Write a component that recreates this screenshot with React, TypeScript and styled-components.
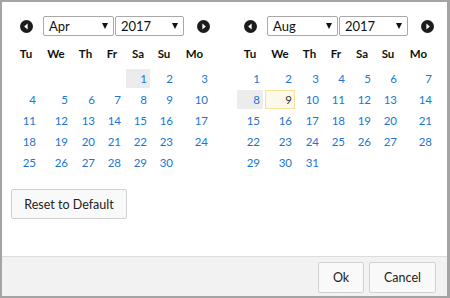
import React from "react";
import styled, { createGlobalStyle } from "styled-components";

const GlobalStyle = createGlobalStyle`
  html, body {
    margin: 0;
    padding: 0;
    background: #ffffff;
  }
  body {
    font-family: Lato, "Liberation Sans", sans-serif;
    color: #222;
  }
`;

const Window = styled.div`
  width: 450px;
  height: 298px;
  box-sizing: border-box;
  border: 2px solid #a4a4a4;
  border-right-width: 3px;
  display: flex;
  flex-direction: column;
  background: #fff;
`;

const Body = styled.div`
  flex: 1;
  padding: 14px 0 0 9px;
`;

const Calendars = styled.div`
  display: flex;
  gap: 26px;
  margin-left: 2px;
`;

const Calendar = styled.div`
  width: 198px;
`;

const NavRow = styled.div`
  display: flex;
  align-items: center;
  height: 20px;
  padding-left: 7px;
`;

const ArrowButton = styled.span`
  display: inline-flex;
  width: 13px;
  height: 13px;
`;

const Selects = styled.div`
  display: flex;
  gap: 1px;
  margin: 0 13px 0 10px;
`;

const SelectBox = styled.div<{ $width: number }>`
  box-sizing: border-box;
  width: ${(p) => p.$width}px;
  height: 20px;
  border: 1px solid #a9a9a9;
  border-radius: 2px;
  display: flex;
  align-items: center;
  justify-content: space-between;
  padding: 0 5px 0 5px;
  font-size: 13px;
  color: #111;
`;

const Caret = styled.span`
  width: 0;
  height: 0;
  border-left: 3.5px solid transparent;
  border-right: 3.5px solid transparent;
  border-top: 6px solid #111;
`;

const WeekGrid = styled.div`
  display: grid;
  grid-template-columns: 26px 30px 25px 24px 24px 24px 33px;
  column-gap: 2px;
  row-gap: 2px;
`;

const WeekHeader = styled(WeekGrid)`
  margin-top: 8px;
`;

const DayGrid = styled(WeekGrid)`
  margin-top: 6px;
`;

const HeadCell = styled.div`
  height: 19px;
  line-height: 19px;
  text-align: center;
  font-weight: 700;
  font-size: 11.5px;
  color: #111;
`;

const DayCell = styled.div<{ $kind?: "muted" | "today" }>`
  box-sizing: border-box;
  height: 19px;
  line-height: 17px;
  text-align: right;
  padding-right: 2px;
  font-size: 11.5px;
  color: ${(p) => (p.$kind === "today" ? "#333" : "#1b76d3")};
  border: 1px solid ${(p) => (p.$kind === "today" ? "#f6e29a" : "transparent")};
  background: ${(p) =>
    p.$kind === "muted" ? "#ececec" : p.$kind === "today" ? "#fcf9ea" : "transparent"};
`;

const ResetButton = styled.button`
  margin-top: 17px;
  width: 116px;
  height: 30px;
  box-sizing: border-box;
  border: 1px solid #cfcfcf;
  border-radius: 2px;
  background: #f9f9f9;
  font-family: inherit;
  font-size: 12.5px;
  color: #222;
  padding: 0;
`;

const Footer = styled.div`
  height: 40px;
  box-sizing: border-box;
  border-top: 1px solid #dcdcdc;
  background: #f2f2f2;
  display: flex;
  justify-content: flex-end;
  align-items: flex-start;
  gap: 5px;
  padding: 5px 11px 0 0;
`;

const FooterButton = styled.button<{ $width: number }>`
  width: ${(p) => p.$width}px;
  height: 31px;
  box-sizing: border-box;
  border: 1px solid #d2d2d2;
  border-radius: 2px;
  background: #f9f9f9;
  font-family: inherit;
  font-size: 12.5px;
  color: #222;
  padding: 0;
`;

const Arrow = ({ dir }: { dir: "left" | "right" }) => (
  <ArrowButton>
    <svg width="13" height="13" viewBox="0 0 13 13">
      <circle cx="6.5" cy="6.5" r="6.5" fill="#1c1c1c" />
      {dir === "left" ? (
        <polygon points="7.6,3.4 7.6,9.6 4.2,6.5" fill="#fff" />
      ) : (
        <polygon points="5.4,3.4 5.4,9.6 8.8,6.5" fill="#fff" />
      )}
    </svg>
  </ArrowButton>
);

const WEEKDAYS = ["Tu", "We", "Th", "Fr", "Sa", "Su", "Mo"];

interface MonthProps {
  month: string;
  year: string;
  offset: number;
  days: number;
  muted?: number;
  today?: number;
}

const Month = ({ month, year, offset, days, muted, today }: MonthProps) => {
  const cells: React.ReactNode[] = [];
  for (let i = 0; i < offset; i++) cells.push(<div key={`e${i}`} />);
  for (let d = 1; d <= days; d++) {
    const kind = d === muted ? "muted" : d === today ? "today" : undefined;
    cells.push(
      <DayCell key={d} $kind={kind}>
        {d}
      </DayCell>
    );
  }
  return (
    <Calendar>
      <NavRow>
        <Arrow dir="left" />
        <Selects>
          <SelectBox $width={71}>
            <span>{month}</span>
            <Caret />
          </SelectBox>
          <SelectBox $width={69}>
            <span>{year}</span>
            <Caret />
          </SelectBox>
        </Selects>
        <Arrow dir="right" />
      </NavRow>
      <WeekHeader>
        {WEEKDAYS.map((w) => (
          <HeadCell key={w}>{w}</HeadCell>
        ))}
      </WeekHeader>
      <DayGrid>{cells}</DayGrid>
    </Calendar>
  );
};

const App = (): JSX.Element => {
  return (
    <>
      <GlobalStyle />
      <Window>
        <Body>
          <Calendars>
            <Month month="Apr" year="2017" offset={4} days={30} muted={1} />
            <Month month="Aug" year="2017" offset={0} days={31} muted={8} today={9} />
          </Calendars>
          <ResetButton>Reset to Default</ResetButton>
        </Body>
        <Footer>
          <FooterButton $width={46}>Ok</FooterButton>
          <FooterButton $width={67}>Cancel</FooterButton>
        </Footer>
      </Window>
    </>
  );
};

export default App;
